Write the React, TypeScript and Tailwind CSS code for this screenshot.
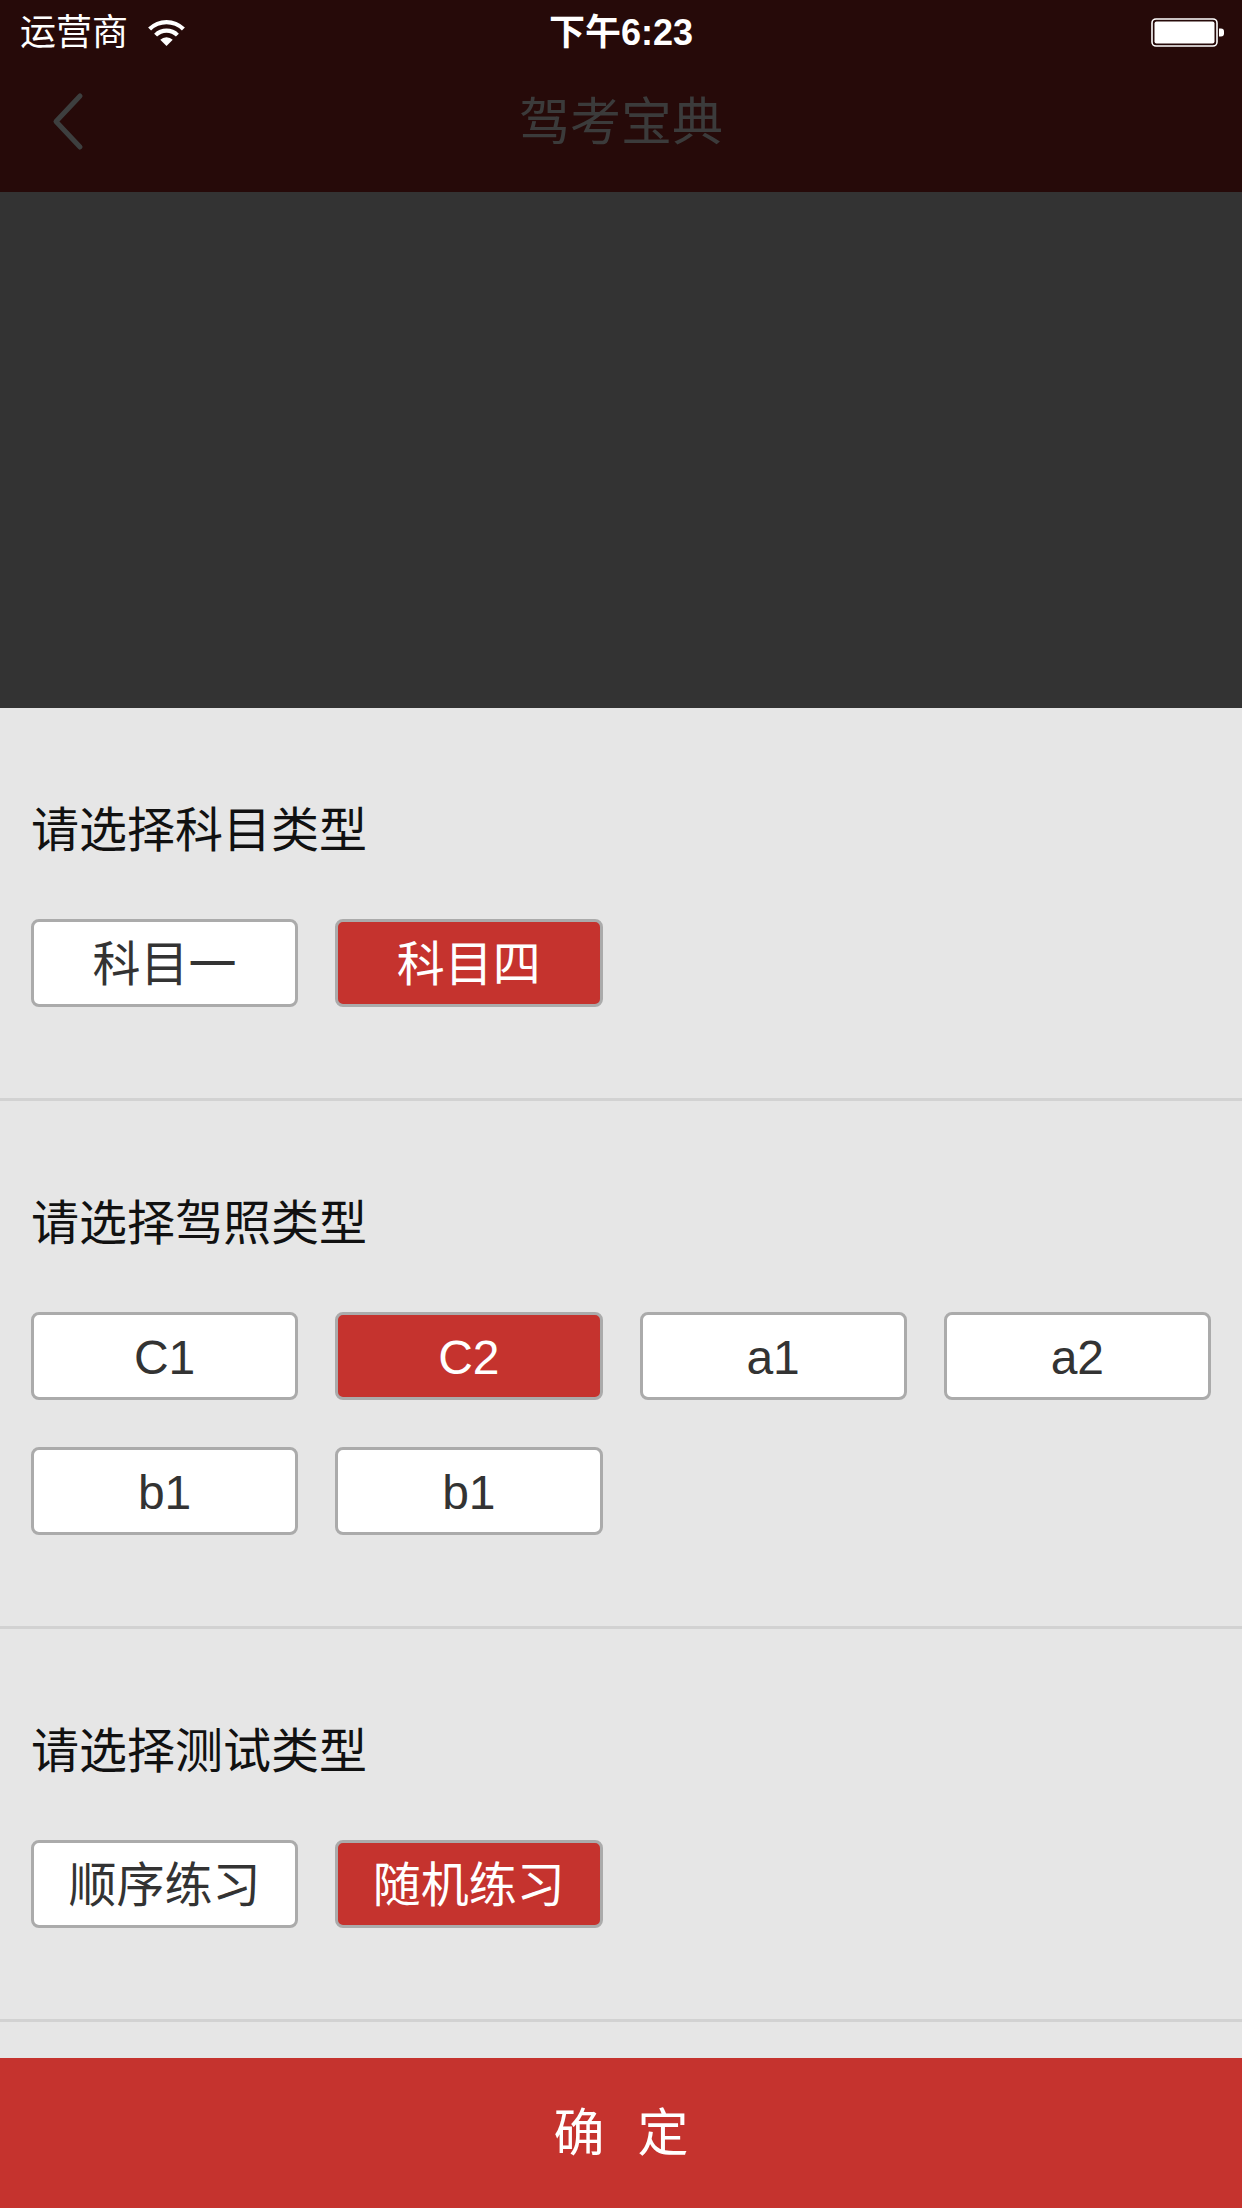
import React from 'react';

type Option = { label: string; active?: boolean };

const sections: { title: string; options: Option[] }[] = [
  {
    title: '请选择科目类型',
    options: [{ label: '科目一' }, { label: '科目四', active: true }],
  },
  {
    title: '请选择驾照类型',
    options: [
      { label: 'C1' },
      { label: 'C2', active: true },
      { label: 'a1' },
      { label: 'a2' },
      { label: 'b1' },
      { label: 'b1' },
    ],
  },
  {
    title: '请选择测试类型',
    options: [{ label: '顺序练习' }, { label: '随机练习', active: true }],
  },
];

const WifiIcon = () => (
  <svg width="37" height="26" viewBox="0 0 37 26" fill="white">
    <path d="M 0.12 7.62 A 26 26 0 0 1 36.88 7.62 L 33.92 10.58 A 21.8 21.8 0 0 0 3.08 10.58 Z" />
    <path d="M 6.13 13.63 A 17.5 17.5 0 0 1 30.87 13.63 L 27.9 16.6 A 13.3 13.3 0 0 0 9.1 16.6 Z" />
    <path d="M 18.5 26 L 12.28 19.78 A 8.8 8.8 0 0 1 24.72 19.78 Z" />
  </svg>
);

const BatteryIcon = () => (
  <svg width="76" height="30" viewBox="0 0 76 30">
    <rect x="1" y="1" width="65" height="27" rx="4" fill="none" stroke="white" strokeWidth="1.6" />
    <rect x="3.5" y="3.5" width="60" height="22" rx="2" fill="white" />
    <path d="M 68 10.5 L 70 10.5 A 3 3 0 0 1 73 13.5 L 73 15.5 A 3 3 0 0 1 70 18.5 L 68 18.5 Z" fill="white" />
  </svg>
);

const BackIcon = () => (
  <svg width="36" height="62" viewBox="0 0 36 62">
    <polyline
      points="30,5 6,30.5 30,56"
      fill="none"
      stroke="#3d3f3f"
      strokeWidth="5"
      strokeLinecap="round"
      strokeLinejoin="round"
    />
  </svg>
);

function OptionButton({ label, active }: Option) {
  return (
    <button
      className={
        active
          ? 'h-[88px] flex items-center justify-center pt-[4px] rounded-[8px] border-[3px] border-[#ababab] bg-[#c5332e] text-white text-[48px] leading-[48px]'
          : 'h-[88px] flex items-center justify-center pt-[4px] rounded-[8px] border-[3px] border-[#ababab] bg-white text-[#333333] text-[48px] leading-[48px]'
      }
    >
      {label}
    </button>
  );
}

export default function App() {
  return (
    <div className="w-[1242px] h-[2208px] flex flex-col bg-[#e6e6e6] font-['Liberation_Sans','Noto_Sans_CJK_SC',sans-serif]">
      <header className="bg-[#260a09]">
        <div className="h-[60px] pt-[6px] grid grid-cols-3 items-center text-white text-[36px] leading-[36px]">
          <div className="flex items-center gap-[20px] pl-[20px]">
            <span>运营商</span>
            <WifiIcon />
          </div>
          <div className="text-center font-semibold">下午6:23</div>
          <div className="flex justify-end pr-[15px]">
            <BatteryIcon />
          </div>
        </div>
        <div className="h-[132px] grid grid-cols-[1fr_auto_1fr] items-start">
          <div className="pl-[50px] pt-[31px]">
            <BackIcon />
          </div>
          <h1 className="pt-[37px] text-[51px] leading-[51px] text-[#3b3b3b]">驾考宝典</h1>
          <div />
        </div>
      </header>

      <div className="h-[516px] bg-[#333333]" />

      {sections.map((s, idx) => (
        <section key={idx} className="pt-[99px] pb-[91px] border-b-[3px] border-[#d2d2d2]">
          <h2 className="px-[31px] text-[48px] leading-[48px] text-[#111111]">{s.title}</h2>
          <div className="mt-[64px] px-[31px] grid grid-cols-4 gap-x-[37px] gap-y-[47px]">
            {s.options.map((o, i) => (
              <OptionButton key={i} label={o.label} active={o.active} />
            ))}
          </div>
        </section>
      ))}

      <button className="mt-auto h-[150px] shrink-0 flex items-center justify-center bg-[#c5332e] text-white text-[51px] leading-[51px] [word-spacing:19px]">
        确 定
      </button>
    </div>
  );
}
